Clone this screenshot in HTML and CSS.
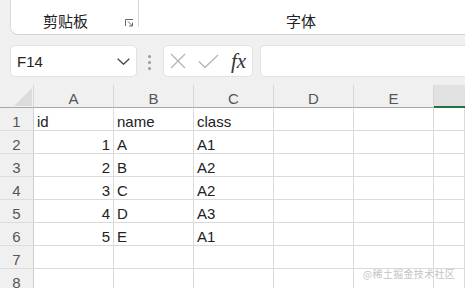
FILE: index.html
```html
<!DOCTYPE html>
<html>
<head>
	<title>Sheet</title>
	<link rel="stylesheet" href="styles.css">
</head>
<body>
	<div class="ribbon">
		<div class="ribbon-panel">
			<div class="group clipboard">
				<span class="group-label">剪贴板</span>
				<svg class="launcher" width="9" height="8" viewBox="0 0 9 8">
					<path d="M0.5 7V0.5H8" fill="none" stroke="#666" stroke-width="1"/>
					<path d="M3 2.5L7.5 7M7.5 3.5V7H4" fill="none" stroke="#666" stroke-width="1"/>
				</svg>
			</div>
			<div class="group font-group">
				<span class="group-label">字体</span>
			</div>
		</div>
	</div>

	<div class="formula-bar">
		<div class="name-box">
			<span>F14</span>
			<svg width="13" height="7" viewBox="0 0 13 7">
				<path d="M0.7 0.7L6.5 6.2L12.3 0.7" fill="none" stroke="#444" stroke-width="1.3"/>
			</svg>
		</div>
		<div class="dots"><i></i><i></i><i></i></div>
		<div class="fx-buttons">
			<svg class="cancel" width="16" height="16" viewBox="0 0 16 16">
				<path d="M1 1L15 15M15 1L1 15" stroke="#b4b4b4" stroke-width="1.3"/>
			</svg>
			<svg class="enter" width="21" height="15" viewBox="0 0 21 15">
				<path d="M1 7.5L7 13.5L20 1" fill="none" stroke="#b4b4b4" stroke-width="1.3"/>
			</svg>
			<span class="fx">fx</span>
		</div>
		<div class="formula-input"></div>
	</div>

	<div class="sheet">
		<div class="corner">
			<svg width="18" height="18" viewBox="0 0 18 18"><path d="M18 0V18H0Z" fill="#dcdcdc"/></svg>
		</div>
		<div class="col-head">A</div>
		<div class="col-head">B</div>
		<div class="col-head">C</div>
		<div class="col-head">D</div>
		<div class="col-head">E</div>
		<div class="col-head selected"></div>

		<div class="row-head">1</div>
		<div class="cell">id</div><div class="cell">name</div><div class="cell">class</div><div class="cell"></div><div class="cell"></div><div class="cell"></div>

		<div class="row-head">2</div>
		<div class="cell num">1</div><div class="cell">A</div><div class="cell">A1</div><div class="cell"></div><div class="cell"></div><div class="cell"></div>

		<div class="row-head">3</div>
		<div class="cell num">2</div><div class="cell">B</div><div class="cell">A2</div><div class="cell"></div><div class="cell"></div><div class="cell"></div>

		<div class="row-head">4</div>
		<div class="cell num">3</div><div class="cell">C</div><div class="cell">A2</div><div class="cell"></div><div class="cell"></div><div class="cell"></div>

		<div class="row-head">5</div>
		<div class="cell num">4</div><div class="cell">D</div><div class="cell">A3</div><div class="cell"></div><div class="cell"></div><div class="cell"></div>

		<div class="row-head">6</div>
		<div class="cell num">5</div><div class="cell">E</div><div class="cell">A1</div><div class="cell"></div><div class="cell"></div><div class="cell"></div>

		<div class="row-head">7</div>
		<div class="cell"></div><div class="cell"></div><div class="cell"></div><div class="cell"></div><div class="cell"></div><div class="cell"></div>

		<div class="row-head">8</div>
		<div class="cell"></div><div class="cell"></div><div class="cell"></div><div class="cell"></div><div class="cell"></div><div class="cell"></div>
	</div>

	<div class="watermark">@稀土掘金技术社区</div>
</body>
</html>
```

FILE: styles.css
```css
*{
	padding: 0px;
	margin: 0px;
	box-sizing: border-box;
}
body{
	width: 465px;
	height: 288px;
	overflow: hidden;
	position: relative;
	background-color: #f0f0f0;
	font-family: "Liberation Sans", "Noto Sans CJK SC", sans-serif;
	font-size: 15px;
	color: #222;
}

/* ribbon */
.ribbon{
	height: 35px;
	padding-left: 10px;
	display: flex;
}
.ribbon-panel{
	flex: 1;
	display: flex;
	background-color: #fff;
	border-left: 1px solid #dcdcdc;
	border-bottom: 1px solid #d4d4d4;
	border-bottom-left-radius: 8px;
}
.group{
	display: flex;
	align-items: flex-start;
	height: 27px;
}
.group-label{
	font-family: "Noto Sans CJK SC", sans-serif;
	font-size: 15px;
	line-height: 15px;
	padding-top: 13px;
	color: #222;
}
.clipboard{
	width: 128px;
	padding-left: 32px;
	border-right: 1px solid #d6d6d6;
}
.launcher{
	margin-left: auto;
	margin-right: 4px;
	margin-top: 19px;
}
.font-group{
	padding-left: 147px;
}

/* formula bar */
.formula-bar{
	height: 50px;
	padding-top: 10px;
	display: flex;
	align-items: flex-start;
}
.name-box, .fx-buttons, .formula-input{
	height: 32px;
	background-color: #fff;
	border: 1px solid #e2e2e2;
	border-radius: 5px;
}
.name-box{
	width: 127px;
	margin-left: 10px;
	display: flex;
	align-items: center;
	padding-left: 6px;
	padding-right: 6px;
	justify-content: space-between;
	font-size: 15px;
}
.dots{
	width: 3px;
	margin-left: 11px;
	margin-top: 10px;
	display: flex;
	flex-direction: column;
	gap: 3px;
}
.dots i{
	display: block;
	width: 3px;
	height: 3px;
	border-radius: 50%;
	background-color: #999;
}
.fx-buttons{
	width: 90px;
	margin-left: 12px;
	display: flex;
	align-items: center;
	padding-left: 6px;
}
.enter{
	margin-left: 12px;
}
.fx{
	margin-left: 12px;
	font-family: "Liberation Serif", serif;
	font-style: italic;
	font-size: 21px;
	color: #333;
	line-height: 20px;
	margin-top: -1px;
}
.formula-input{
	flex: 1;
	margin-left: 7px;
	border-right: none;
	border-top-right-radius: 0px;
	border-bottom-right-radius: 0px;
}

/* grid */
.sheet{
	display: grid;
	grid-template-columns: 34px repeat(5, 80px) 1fr;
	grid-auto-rows: 23px;
}
.corner, .col-head{
	border-bottom: 1px solid #a8a8a8;
	border-right: 1px solid #d8d8d8;
	background-color: #f0f0f0;
}
.corner{
	display: flex;
	justify-content: flex-end;
	align-items: flex-end;
	padding-right: 1px;
	padding-bottom: 1px;
}
.col-head{
	text-align: center;
	color: #555;
	display: flex;
	align-items: flex-end;
	justify-content: center;
}
.col-head.selected{
	background-color: #e1e1e1;
	border-right: none;
	border-bottom: 2px solid #217346;
}
.row-head{
	background-color: #f0f0f0;
	border-right: 1px solid #d0d0d0;
	border-bottom: 1px solid #dcdcdc;
	color: #555;
	display: flex;
	align-items: flex-end;
	justify-content: center;
}
.cell{
	background-color: #fff;
	border-right: 1px solid #dadada;
	border-bottom: 1px solid #dadada;
	display: flex;
	align-items: flex-end;
	padding-left: 3px;
	padding-right: 3px;
	white-space: nowrap;
}
.cell.num{
	justify-content: flex-end;
}

.watermark{
	position: absolute;
	right: 10px;
	bottom: 7px;
	font-family: "Noto Sans CJK SC", sans-serif;
	font-size: 10px;
	color: #c4c4c4;
	letter-spacing: 0.3px;
}
```
